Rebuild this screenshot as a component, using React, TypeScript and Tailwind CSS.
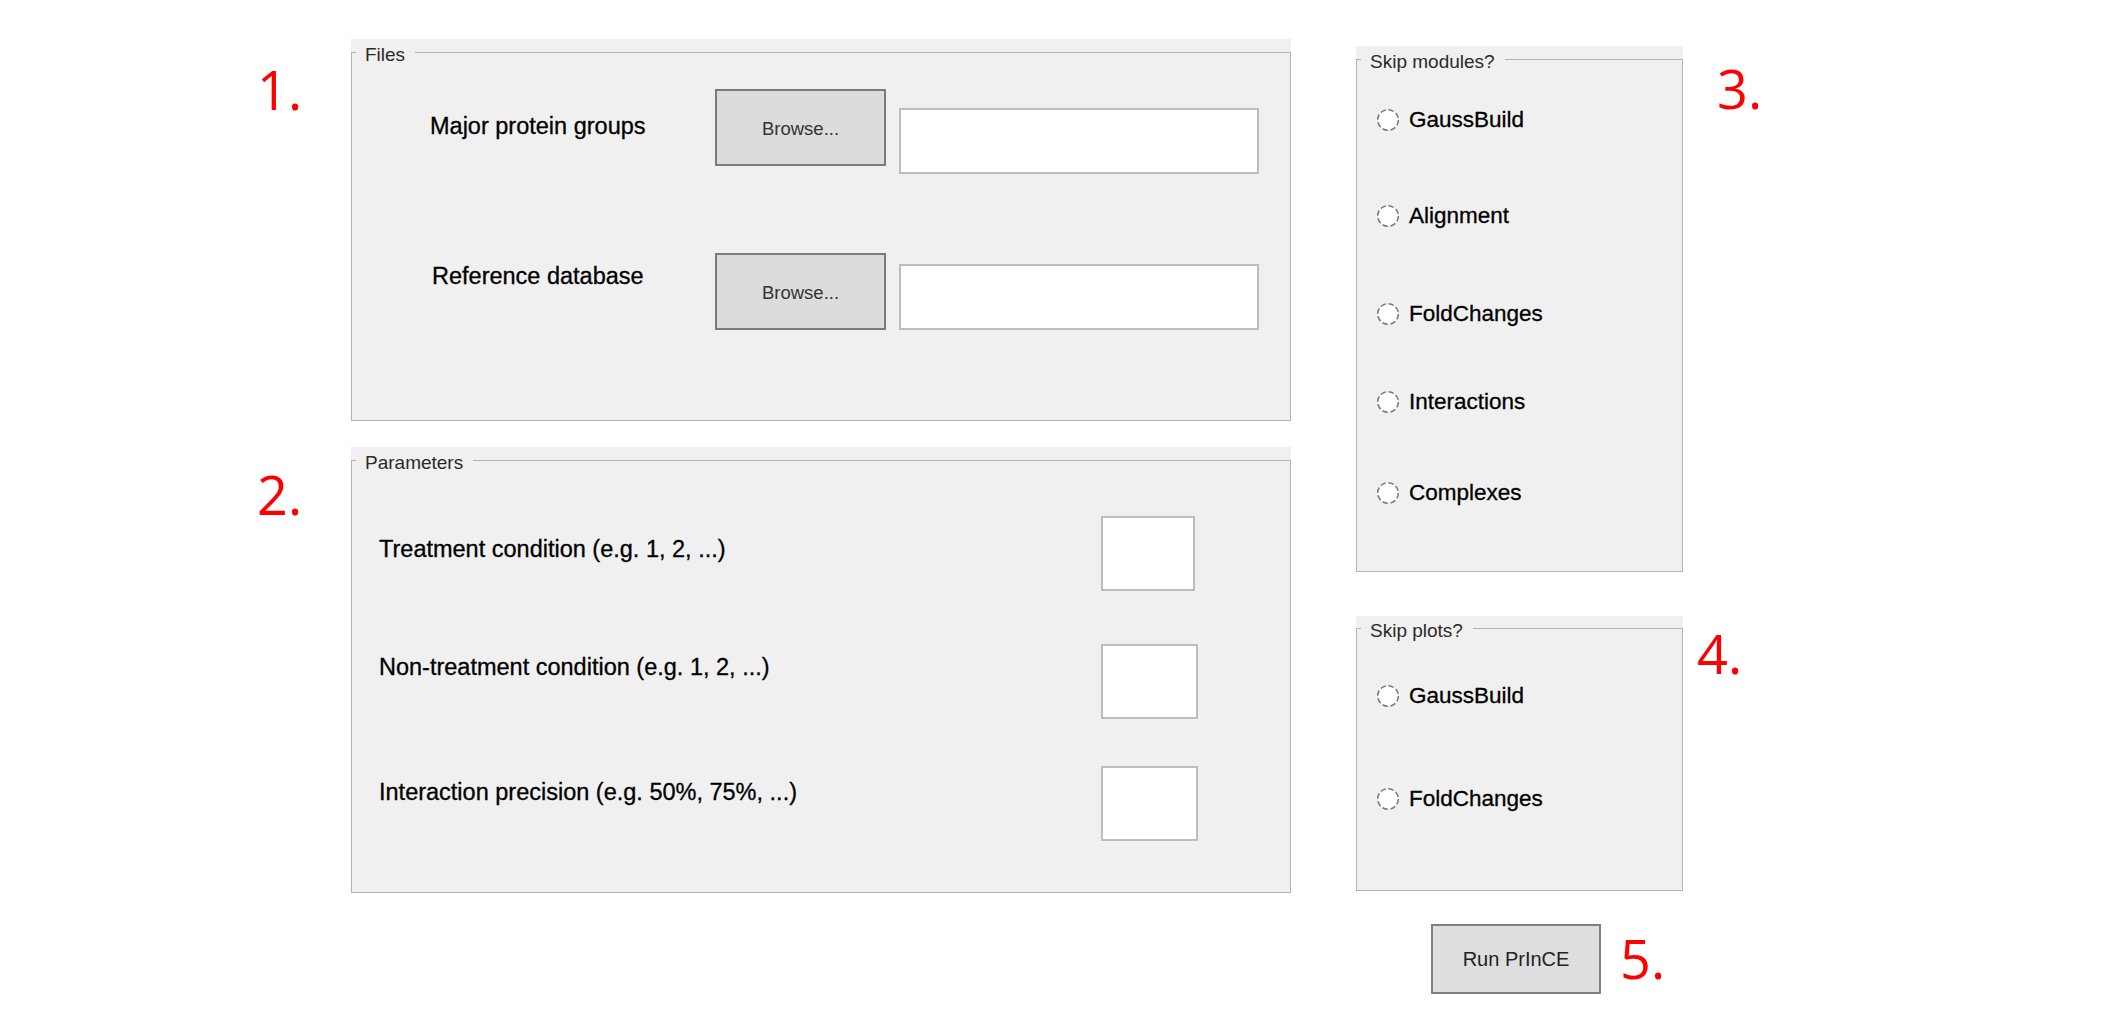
import React from "react";

const SANS = "font-['Liberation_Sans',Arial,sans-serif]";
const BOLDISH = "[-webkit-text-stroke:0.3px_#000]";

function Radio({ label, className = "" }: { label: string; className?: string }) {
  return (
    <div className={`flex items-center h-[28px] ${className}`}>
      <svg width="24" height="24" viewBox="0 0 24 24" className="shrink-0 -ml-[1px]">
        <circle cx="12" cy="12" r="10.3" fill="#ffffff" stroke="#7c7c7c" strokeWidth="1.6" strokeDasharray="5.5 2.6" />
      </svg>
      <span className={`ml-[9px] text-[22.5px] leading-[28px] text-black ${SANS} ${BOLDISH}`}>{label}</span>
    </div>
  );
}

function Group({
  title,
  outer,
  children,
}: {
  title: string;
  outer: string;
  children: React.ReactNode;
}) {
  return (
    <div className={`bg-[#f0f0f0] ${outer}`}>
      <div className="relative h-full border border-[#b4b4b4]">
        <span
          className={`absolute top-[-8px] left-[4px] pl-[9px] pr-[10px] bg-[#f0f0f0] text-[19px] leading-[20px] text-[#2a2a2a] ${SANS}`}
        >
          {title}
        </span>
        {children}
      </div>
    </div>
  );
}

function Num({ n, className = "" }: { n: string; className?: string }) {
  return (
    <div className={`text-[54px] leading-none text-[#ff0000] font-['Open_Sans',sans-serif] ${className}`}>
      {n}
    </div>
  );
}

function Browse() {
  return (
    <div
      className={`w-[171px] h-[77px] shrink-0 flex items-center justify-center pt-[2px] bg-[#dcdcdc] border-2 border-[#7b7b7b] text-[18.5px] text-[#333] ${SANS}`}
    >
      Browse...
    </div>
  );
}

const LABEL = `text-[23.5px] leading-[28px] text-black ${SANS} ${BOLDISH}`;

export default function App() {
  return (
    <div className="min-h-[1014px] w-[2120px] bg-white flex pt-[39px] pl-[257px]">
      {/* left column */}
      <div className="flex flex-col gap-[26px]">
        <div className="flex">
          <Num n="1." className="w-[94px] mt-[23px]" />
          <Group title="Files" outer="w-[940px] h-[382px] pt-[13px]">
            <div className="flex flex-col pt-[36px]">
              <div className="flex items-start ml-[78px]">
                <div className={`w-[285px] shrink-0 mt-[23px] ${LABEL}`}>Major protein groups</div>
                <Browse />
                <div className="ml-[13px] mt-[19px] w-[360px] h-[66px] shrink-0 bg-white border-2 border-[#bdbdbd]" />
              </div>
              <div className="flex items-start ml-[80px] mt-[79px]">
                <div className={`w-[283px] shrink-0 mt-[9px] ${LABEL}`}>Reference database</div>
                <Browse />
                <div className="ml-[13px] mt-[11px] w-[360px] h-[66px] shrink-0 bg-white border-2 border-[#bdbdbd]" />
              </div>
            </div>
          </Group>
        </div>
        <div className="flex">
          <Num n="2." className="w-[94px] mt-[20px]" />
          <Group title="Parameters" outer="w-[940px] h-[446px] pt-[13px]">
            <div className="flex flex-col pt-[55px] pl-[27px]">
              <div className="flex items-start">
                <div className={`w-[722px] shrink-0 mt-[19px] ${LABEL}`}>Treatment condition (e.g. 1, 2, ...)</div>
                <div className="w-[94px] h-[75px] shrink-0 bg-white border-2 border-[#bdbdbd]" />
              </div>
              <div className="flex items-start mt-[53px]">
                <div className={`w-[722px] shrink-0 mt-[9px] ${LABEL}`}>Non-treatment condition (e.g. 1, 2, ...)</div>
                <div className="w-[97px] h-[75px] shrink-0 bg-white border-2 border-[#bdbdbd]" />
              </div>
              <div className="flex items-start mt-[47px]">
                <div className={`w-[722px] shrink-0 mt-[12px] ${LABEL}`}>Interaction precision (e.g. 50%, 75%, ...)</div>
                <div className="w-[97px] h-[75px] shrink-0 bg-white border-2 border-[#bdbdbd]" />
              </div>
            </div>
          </Group>
        </div>
      </div>

      {/* right column */}
      <div className="flex flex-col ml-[65px] mt-[7px]">
        <div className="flex items-start">
          <Group title="Skip modules?" outer="w-[327px] h-[526px] pt-[13px]">
            <div className="flex flex-col pl-[20px] pt-[46px]">
              <Radio label="GaussBuild" />
              <Radio label="Alignment" className="mt-[68px]" />
              <Radio label="FoldChanges" className="mt-[70px]" />
              <Radio label="Interactions" className="mt-[60px]" />
              <Radio label="Complexes" className="mt-[63px]" />
            </div>
          </Group>
          <Num n="3." className="ml-[34px] mt-[15px]" />
        </div>
        <div className="flex items-start mt-[44px]">
          <Group title="Skip plots?" outer="w-[327px] h-[275px] pt-[12px]">
            <div className="flex flex-col pl-[20px] pt-[53px]">
              <Radio label="GaussBuild" />
              <Radio label="FoldChanges" className="mt-[75px]" />
            </div>
          </Group>
          <Num n="4." className="ml-[14px] mt-[10px]" />
        </div>
        <div className="flex items-start mt-[33px] ml-[75px]">
          <div
            className={`w-[170px] h-[70px] flex items-center justify-center bg-[#dedede] border-2 border-[#808080] text-[20px] text-[#222] ${SANS}`}
          >
            Run PrInCE
          </div>
          <Num n="5." className="ml-[19px] mt-[7px]" />
        </div>
      </div>
    </div>
  );
}
